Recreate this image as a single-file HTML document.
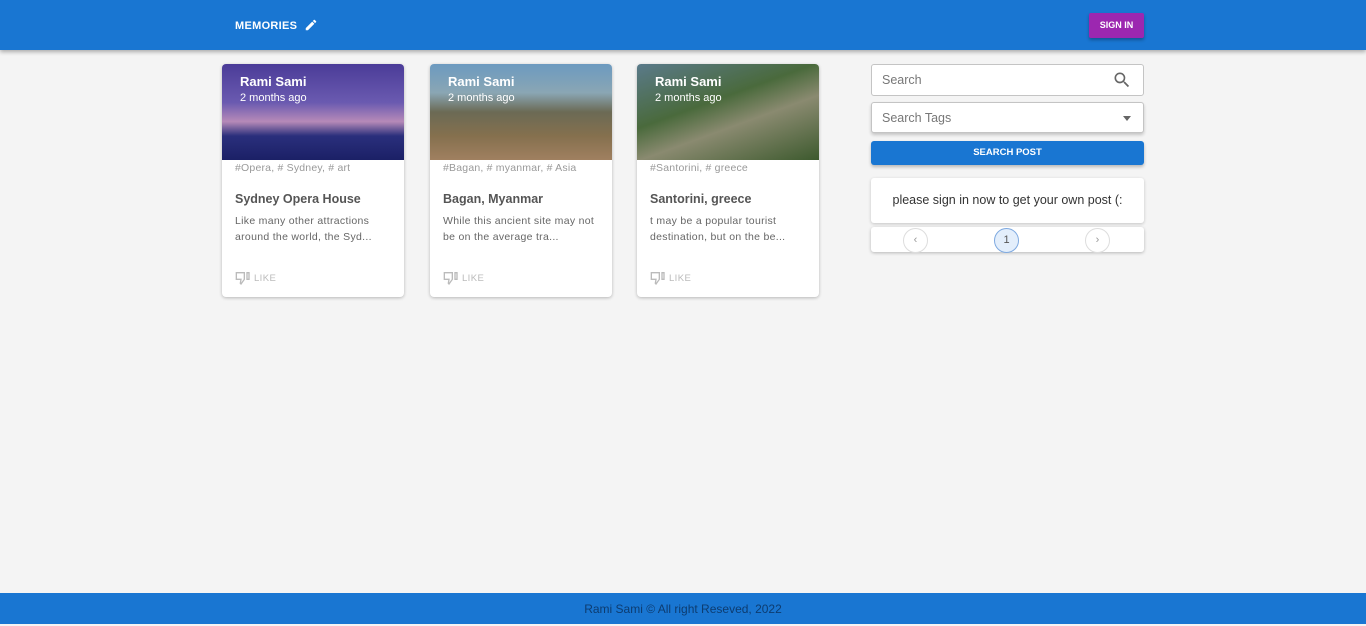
<!DOCTYPE html>
<html><head><meta charset="utf-8"><style>
*{box-sizing:border-box;margin:0;padding:0}
body{width:1366px;height:624px;background:#f4f4f4;font-family:"Liberation Sans",Arial,sans-serif;position:relative;overflow:hidden}
.bar{position:absolute;left:0;top:0;width:1366px;height:50px;background:#1976d2;box-shadow:0 2px 4px rgba(0,0,0,.3)}
.logo{position:absolute;left:235px;top:18px;color:#fff;font-weight:bold;font-size:11px;letter-spacing:.3px}
.signin{position:absolute;left:1089px;top:13px;width:55px;height:25px;background:#9c27b0;color:#fff;font-size:9px;font-weight:bold;text-align:center;line-height:25px;box-shadow:0 2px 3px rgba(0,0,0,.3);border-radius:2px}
.card{position:absolute;top:64px;width:182px;height:233px;background:#fff;border-radius:4px;box-shadow:0 1px 3px rgba(0,0,0,.25);overflow:hidden}
.img{height:96px;position:relative}
.img b{position:absolute;left:18px;top:10px;color:#fff;font-size:13px}
.img span{position:absolute;left:18px;top:28px;color:#fff;font-size:11px}
.tags{color:#999;font-size:10.5px;margin:2px 0 0 13px;letter-spacing:.2px}
.title{color:#555;font-weight:bold;font-size:12.5px;margin:18px 0 0 13px}
.desc{color:#666;font-size:10.5px;line-height:16px;margin:7px 0 0 13px;width:158px;letter-spacing:.3px}
.like{position:absolute;left:13px;top:207px;color:#bbb;font-size:9.5px;display:flex;align-items:center;gap:3px;letter-spacing:.4px}
.box{position:absolute;left:871px;width:273px;background:#fff;border-radius:3px}
.foot{position:absolute;left:0;top:593px;width:1366px;height:31px;background:#1976d2;color:#0d3c70;font-size:12px;text-align:center;line-height:33px}
.pg{position:absolute;top:229px;width:25px;height:25px;border:1px solid #ddd;border-radius:50%;text-align:center;line-height:23px;font-size:11px;color:#999}
</style></head><body>
<div class="bar"><div class="logo">MEMORIES <svg width="14" height="14" viewBox="0 0 24 24" style="vertical-align:-3px;margin-left:3px"><path fill="#fff" d="M3 17.25V21h3.75L17.81 9.94l-3.75-3.75L3 17.25zM20.71 7.04a1 1 0 000-1.41l-2.34-2.34a1 1 0 00-1.41 0l-1.83 1.83 3.75 3.75 1.83-1.83z"/></svg></div><div class="signin">SIGN IN</div></div>

<div class="card" style="left:222px"><div class="img" style="background:linear-gradient(180deg,#4b3c98 0%,#6a5ab0 40%,#b68ab8 60%,#2a2f7c 75%,#1b2066 100%)"><b>Rami Sami</b><span>2 months ago</span></div><div class="tags">#Opera, # Sydney, # art</div><div class="title">Sydney Opera House</div><div class="desc">Like many other attractions around the world, the Syd...</div><div class="like"><svg width="16" height="14" viewBox="0 0 24 20"><path fill="none" stroke="#bbb" stroke-width="2" d="M2 2h12v10l-5 7-1-1 1-6H2zM18 2h3v10h-3z"/></svg>LIKE</div></div>
<div class="card" style="left:430px"><div class="img" style="background:linear-gradient(180deg,#6c9ac0 0%,#8aa6b4 30%,#6b6a55 50%,#85704e 75%,#a08060 100%)"><b>Rami Sami</b><span>2 months ago</span></div><div class="tags">#Bagan, # myanmar, # Asia</div><div class="title">Bagan, Myanmar</div><div class="desc">While this ancient site may not be on the average tra...</div><div class="like"><svg width="16" height="14" viewBox="0 0 24 20"><path fill="none" stroke="#bbb" stroke-width="2" d="M2 2h12v10l-5 7-1-1 1-6H2zM18 2h3v10h-3z"/></svg>LIKE</div></div>
<div class="card" style="left:637px"><div class="img" style="background:linear-gradient(160deg,#5a7a8a 0%,#4a6a3c 40%,#8a8a70 60%,#3d5a2e 100%)"><b>Rami Sami</b><span>2 months ago</span></div><div class="tags">#Santorini, # greece</div><div class="title">Santorini, greece</div><div class="desc">t may be a popular tourist destination, but on the be...</div><div class="like"><svg width="16" height="14" viewBox="0 0 24 20"><path fill="none" stroke="#bbb" stroke-width="2" d="M2 2h12v10l-5 7-1-1 1-6H2zM18 2h3v10h-3z"/></svg>LIKE</div></div>

<div class="box" style="top:64px;height:32px;border:1px solid #c4c4c4;font-size:12.5px;color:#777;padding:8px 10px">Search<svg style="position:absolute;right:11px;top:5px" width="20" height="20" viewBox="0 0 24 24"><path fill="#666" d="M15.5 14h-.79l-.28-.27A6.47 6.47 0 0016 9.5 6.5 6.5 0 109.5 16c1.61 0 3.09-.59 4.23-1.57l.27.28v.79l5 4.99L20.49 19l-4.99-5zm-6 0C7.01 14 5 11.99 5 9.5S7.01 5 9.5 5 14 7.01 14 9.5 11.99 14 9.5 14z"/></svg></div>
<div class="box" style="top:102px;height:31px;border:1px solid #c4c4c4;box-shadow:0 2px 3px rgba(0,0,0,.2);font-size:12.5px;color:#777;padding:8px 10px">Search Tags<span style="position:absolute;right:12px;top:13px;border:4px solid transparent;border-top:5px solid #666"></span></div>
<div class="box" style="top:141px;height:24px;background:#1976d2;color:#fff;font-size:9.5px;font-weight:bold;text-align:center;line-height:24px;box-shadow:0 2px 3px rgba(0,0,0,.25)">SEARCH POST</div>
<div class="box" style="top:178px;height:45px;box-shadow:0 1px 3px rgba(0,0,0,.2);font-size:12.5px;color:#333;text-align:center;line-height:45px">please sign in now to get your own post (:</div>
<div class="box" style="top:227px;height:25px;box-shadow:0 1px 3px rgba(0,0,0,.25)"></div>
<div class="pg" style="left:903px;top:228px">‹</div>
<div class="pg" style="left:994px;top:228px;background:#e3eefb;border-color:#7ea9e0;color:#555">1</div>
<div class="pg" style="left:1085px;top:228px">›</div>

<div class="foot">Rami Sami © All right Reseved, 2022</div>
</body></html>
